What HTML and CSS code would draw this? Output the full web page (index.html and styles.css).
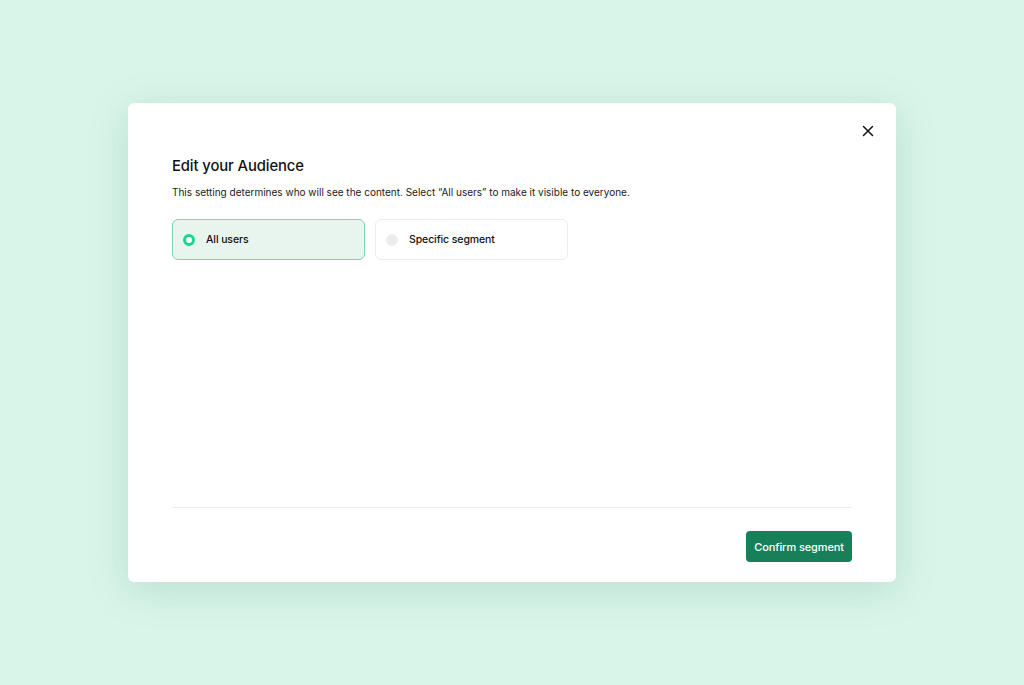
FILE: index.html
```html
<!doctype html>
<html lang="en">
  <head>
    <meta charset="UTF-8" />
    <title>Edit your Audience</title>
    <link rel="stylesheet" href="styles.css">
  </head>
  <body>
    <div class="modal">
      <button class="close" aria-label="Close">
        <svg width="12" height="12" viewBox="0 0 12 12">
          <path d="M1.5 1.5 L10.5 10.5 M10.5 1.5 L1.5 10.5" stroke="#111" stroke-width="1.5" stroke-linecap="round" />
        </svg>
      </button>

      <div class="modal-body">
        <h2>Edit your Audience</h2>
        <p class="hint">This setting determines who will see the content. Select “All users” to make it visible to everyone.</p>

        <div class="options">
          <label class="option selected">
            <span class="radio"></span>
            All users
          </label>
          <label class="option">
            <span class="radio"></span>
            Specific segment
          </label>
        </div>
      </div>

      <div class="modal-footer">
        <button class="confirm">Confirm segment</button>
      </div>
    </div>
  </body>
</html>
```

FILE: styles.css
```css
body {
  margin: 0;
  height: 685px;
  background: #d8f5e9;
  font-family: Inter, "Noto Sans", sans-serif;
  color: #111;
}
.modal {
  position: relative;
  box-sizing: border-box;
  width: 768px;
  height: 479px;
  margin: 103px 0 0 128px;
  padding: 54px 44px 20px;
  background: #fff;
  border-radius: 6px;
  box-shadow: 0 8px 40px rgba(60, 120, 95, 0.18);
  display: flex;
  flex-direction: column;
}
.close {
  position: absolute;
  top: 22px;
  right: 22px;
  width: 12px;
  height: 12px;
  padding: 0;
  border: none;
  background: none;
  cursor: pointer;
}
.close svg {
  display: block;
}
.modal-body {
  flex: 1;
}
h2 {
  margin: 0;
  font-size: 14.8px;
  font-weight: 500;
  letter-spacing: -0.1px;
  line-height: 18px;
}
.hint {
  margin: 10px 0 0;
  font-size: 10px;
  line-height: 14px;
  color: #1a1a1a;
}
.options {
  display: flex;
  gap: 10px;
  margin-top: 20px;
}
.option {
  box-sizing: border-box;
  width: 193px;
  height: 41px;
  display: flex;
  align-items: center;
  gap: 11px;
  padding: 0 10px;
  border: 1px solid #ececec;
  border-radius: 6px;
  font-size: 10.5px;
  font-weight: 500;
  letter-spacing: -0.1px;
  cursor: pointer;
}
.option.selected {
  background: #e8f5ef;
  border-color: #7fd5ae;
}
.radio {
  box-sizing: border-box;
  width: 12px;
  height: 12px;
  border-radius: 50%;
  background: #ededed;
}
.option.selected .radio {
  background: #fff;
  border: 3px solid #1fd394;
}
.modal-footer {
  display: flex;
  justify-content: flex-end;
  border-top: 1px solid #eeeeee;
  padding-top: 23px;
}
.confirm {
  height: 31px;
  padding: 0 8px;
  white-space: nowrap;
  border: none;
  border-radius: 4px;
  background: #168158;
  color: #fff;
  font-family: inherit;
  font-size: 11px;
  font-weight: 500;
  letter-spacing: -0.1px;
  cursor: pointer;
}
```
